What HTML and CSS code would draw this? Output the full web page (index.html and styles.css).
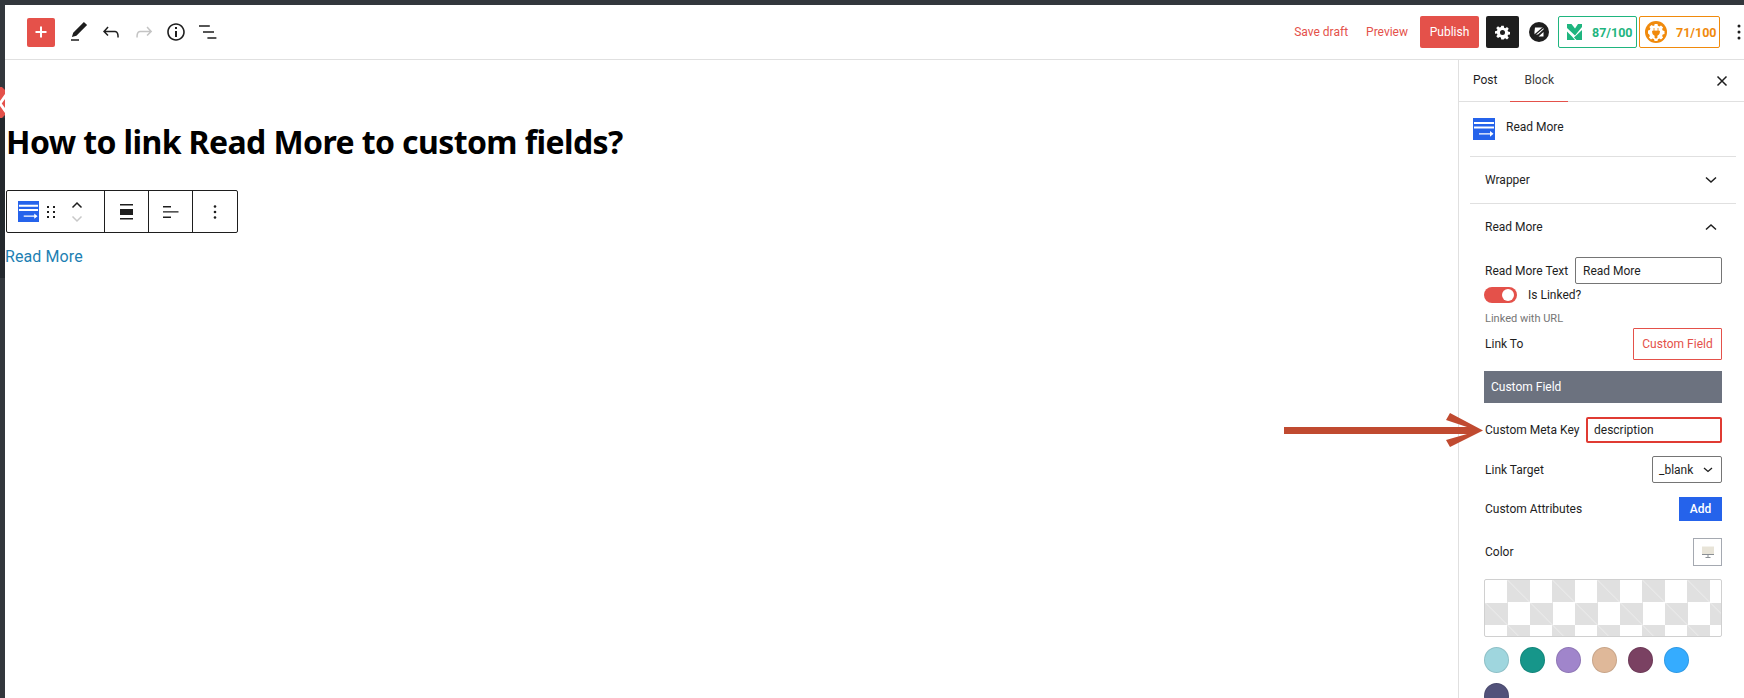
FILE: index.html
```html
<!DOCTYPE html>
<html lang="en">
<head>
<meta charset="utf-8">
<title>Edit Post</title>
<link rel="stylesheet" href="styles.css">
</head>
<body>
<div class="adminbar"></div>
<div class="shell">
  <div class="leftrail"><svg class="railmark" width="5" height="31" viewBox="0 0 5 31"><path d="M0 0h2l3 3v25l-3 3H0z" fill="#e4514a"/><path d="M0 16.500 6 8M0 16.500 6 25" stroke="#fff" stroke-width="3" fill="none"/></svg></div>
  <div class="main">
    <header class="topbar">
      <div class="tools">
        <button class="addbtn"><svg width="14" height="14" viewBox="0 0 14 14"><path d="M7 1.500v11M1.500 7h11" stroke="#fff" stroke-width="2" fill="none"/></svg></button>
        <svg class="tool" width="24" height="24" viewBox="0 0 24 24"><path d="M20.100 5.100 16.900 2 6.200 12.700l-1.300 4.400 4.500-1.300L20.100 5.100zM4 20.800h8v-1.500H4v1.500z" fill="#1e1e1e"/></svg>
        <svg class="tool" width="24" height="24" viewBox="0 0 24 24"><path d="M18.300 11.700c-.6-.6-1.400-.9-2.300-.9H6.700l2.900-3.300-1.100-1-4.500 5L8.500 16l1-1-2.700-2.700H16c.5 0 .9.2 1.300.5 1 1 1 3.400 1 4.500v.3h1.500v-.2c0-1.500 0-4.300-1.500-5.700z" fill="#1e1e1e"/></svg>
        <svg class="tool" width="24" height="24" viewBox="0 0 24 24"><path d="M15.600 6.500l-1.100 1 2.900 3.300H8c-.9 0-1.700.3-2.300.9-1.400 1.500-1.400 4.200-1.400 5.600v.2h1.500v-.3c0-1.100 0-3.500 1-4.500.3-.3.7-.5 1.300-.5h9.200L14.500 15l1.100 1.100 4.600-4.600-4.600-5z" fill="#c4c4c4"/></svg>
        <svg class="tool" width="24" height="24" viewBox="0 0 24 24"><path d="M12 3.200c-4.800 0-8.800 3.900-8.800 8.800 0 4.800 3.900 8.800 8.800 8.800 4.800 0 8.800-3.900 8.800-8.800 0-4.800-4-8.800-8.800-8.800zm0 16c-4 0-7.200-3.300-7.200-7.200C4.800 8 8 4.800 12 4.800s7.200 3.300 7.200 7.200c0 4-3.200 7.200-7.200 7.200zM11 17h2v-6h-2v6zm0-8h2V7h-2v2z" fill="#1e1e1e"/></svg>
        <svg class="tool" width="24" height="24" viewBox="0 0 24 24"><path d="M13.800 5.200H3v1.500h10.800V5.200zM7 11.200h11v1.500H7zM11.400 17.200h9v1.500h-9z" fill="#1e1e1e"/></svg>
      </div>
      <div class="actions">
        <a class="linkbtn savedraft">Save draft</a>
        <a class="linkbtn preview">Preview</a>
        <button class="publish">Publish</button>
        <button class="settings"><svg width="15" height="15" viewBox="0 0 24 24"><path fill-rule="evenodd" d="M10 1h4l.6 3.200 1.900.8 2.700-1.900 2.800 2.800-1.900 2.700.8 1.900 3.100.6v4l-3.100.6-.8 1.900 1.900 2.700-2.800 2.800-2.700-1.900-1.900.8L14 23h-4l-.6-3.200-1.900-.8-2.700 1.900L2 18.100l1.900-2.700-.8-1.900L0 13.900v-4l3.100-.6.8-1.900L2 4.700 4.800 1.900l2.700 1.900 1.900-.8zM12 8a4 4 0 1 0 0 8 4 4 0 0 0 0-8z" fill="#fff"/></svg></button>
        <svg class="zlogo" width="20" height="20" viewBox="0 0 20 20"><circle cx="10" cy="10" r="10" fill="#1e1e1e"/><path d="M6 5.500h8.500v2L9 12.500H5.500v-3zM14.500 14.500H9.500l5-4.500z" fill="#fff"/><path d="M5 13.500 15 5" stroke="#1e1e1e" stroke-width="1.300"/></svg>
        <div class="score green">
          <svg width="15" height="16" viewBox="0 0 15 16"><path d="M0 0h4.500L8 4.500 11 0h4v3l-7 8.500L0 4z" fill="#1fb57f"/><path d="M0 7.500l5 5L8 16H0zM15 6v10H9.500L7 13.500z" fill="#1fb57f"/></svg>
          <span>87/100</span>
        </div>
        <div class="score orange">
          <svg width="22" height="22" viewBox="0 0 22 22"><circle cx="11" cy="11" r="11" fill="#f08a0c"/><path d="M9.500 3h3l.4 1.800 1.500.6 1.600-1 2.100 2.100-1 1.600.6 1.500 1.800.4v3l-1.800.4-.6 1.500 1 1.600-2.100 2.100-1.600-1-1.500.6-.4 1.800h-3l-.4-1.800-1.500-.6-1.600 1-2.100-2.100 1-1.600-.6-1.500L3 12.500v-3l1.800-.4.6-1.500-1-1.600 2.100-2.100 1.600 1 1.500-.6z" fill="#fff"/><path d="M9 7v3M13 7v3M7.500 10h7v1.500A3.500 3.500 0 0 1 12 14.500V17h-2v-2.500a3.500 3.500 0 0 1-2.500-3z" fill="#f08a0c" stroke="#f08a0c" stroke-width=".8"/></svg>
          <span>71/100</span>
        </div>
        <svg class="kebab" width="4" height="16" viewBox="0 0 4 16"><circle cx="2" cy="2" r="1.500" fill="#1e1e1e"/><circle cx="2" cy="8" r="1.500" fill="#1e1e1e"/><circle cx="2" cy="14" r="1.500" fill="#1e1e1e"/></svg>
      </div>
    </header>
    <div class="workspace">
      <main class="editor">
        <h1 class="title">How to link Read More to custom fields?</h1>
        <div class="blocktoolbar">
          <div class="tbgroup first">
            <svg class="rmicon" width="21" height="21" viewBox="0 0 22 22"><rect width="22" height="22" fill="#2563eb"/><path d="M1 4h20v2H1zM1 8.500h20v2H1zM6 15.200h13v1.300H6z" fill="#fff"/><path d="M17 13l3.500 2.850L17 18.700z" fill="#fff"/></svg>
            <svg width="10" height="14" viewBox="0 0 10 14"><g fill="#1e1e1e"><rect x="1" y="1" width="2" height="2"/><rect x="7" y="1" width="2" height="2"/><rect x="1" y="6" width="2" height="2"/><rect x="7" y="6" width="2" height="2"/><rect x="1" y="11" width="2" height="2"/><rect x="7" y="11" width="2" height="2"/></g></svg>
            <div class="movers">
              <svg width="12" height="8" viewBox="0 0 12 8"><path d="M1.500 6.500 6 2l4.500 4.500" stroke="#1e1e1e" stroke-width="1.500" fill="none"/></svg>
              <svg width="12" height="8" viewBox="0 0 12 8"><path d="M1.500 1.500 6 6l4.500-4.500" stroke="#c8c8c8" stroke-width="1.500" fill="none"/></svg>
            </div>
          </div>
          <div class="tbgroup"><svg width="14" height="16" viewBox="0 0 14 16"><path d="M0 0h13v1.500H0zM0 5h13v6H0zM0 14h13v1.500H0z" fill="#1e1e1e"/></svg></div>
          <div class="tbgroup"><svg width="16" height="14" viewBox="0 0 16 14"><path d="M0 1h8v1.400H0zM0 6.200h15.500v1.400H0zM0 11.500h8v1.400H0z" fill="#1e1e1e"/></svg></div>
          <div class="tbgroup last"><svg width="4" height="14" viewBox="0 0 4 14"><circle cx="2" cy="1.500" r="1.300" fill="#1e1e1e"/><circle cx="2" cy="7" r="1.300" fill="#1e1e1e"/><circle cx="2" cy="12.500" r="1.300" fill="#1e1e1e"/></svg></div>
        </div>
        <a class="readmore">Read More</a>
        <div class="arrow">
          <svg width="200" height="35" viewBox="0 0 200 35"><path d="M0 14H183L162 7 166 0 199 17.500 166 34 162 27 183 21H0z" fill="#c04a30"/></svg>
        </div>
      </main>
      <aside class="sidebar">
        <div class="tabs">
          <span class="tab">Post</span>
          <span class="tab active">Block</span>
          <svg class="close" width="12" height="12" viewBox="0 0 12 12"><path d="M1.500 1.500l9 9M10.500 1.500l-9 9" stroke="#1e1e1e" stroke-width="1.500" fill="none"/></svg>
        </div>
        <div class="sidebody">
          <div class="blockcard">
            <svg width="22" height="22" viewBox="0 0 22 22"><rect width="22" height="22" fill="#2563eb"/><path d="M1 4h20v2H1zM1 8.500h20v2H1zM6 15.200h13v1.300H6z" fill="#fff"/><path d="M17 13l3.500 2.850L17 18.700z" fill="#fff"/></svg>
            <span class="cardname">Read More</span>
          </div>
          <div class="panel closed">
            <span>Wrapper</span>
            <svg width="12" height="8" viewBox="0 0 12 8"><path d="M1 1.500 6 6l5-4.500" stroke="#1e1e1e" stroke-width="1.500" fill="none"/></svg>
          </div>
          <div class="panel open">
            <span>Read More</span>
            <svg width="12" height="8" viewBox="0 0 12 8"><path d="M1 6.500 6 2l5 4.500" stroke="#1e1e1e" stroke-width="1.500" fill="none"/></svg>
          </div>
          <div class="fields">
            <div class="row textrow">
              <label>Read More Text</label>
              <div class="input w147">Read More</div>
            </div>
            <div class="togglerow">
              <span class="toggle"><i></i></span>
              <span>Is Linked?</span>
            </div>
            <div class="help">Linked with URL</div>
            <div class="row linkto">
              <label>Link To</label>
              <div class="outline">Custom Field</div>
            </div>
            <div class="greybar">Custom Field</div>
            <div class="row metakey">
              <label>Custom Meta Key</label>
              <div class="input meta">description</div>
            </div>
            <div class="row target">
              <label>Link Target</label>
              <div class="select">_blank<svg width="10" height="6" viewBox="0 0 10 6"><path d="M1 1l4 3.500L9 1" stroke="#1e1e1e" stroke-width="1.300" fill="none"/></svg></div>
            </div>
            <div class="row attrs">
              <label>Custom Attributes</label>
              <button class="addattr">Add</button>
            </div>
            <div class="row colorrow">
              <label>Color</label>
              <div class="device"><svg width="14" height="14" viewBox="0 0 14 14"><path d="M1 1.500h12v8H1z" fill="#e8e4d8"/><path d="M1 9.500h12M7 10v2M4.500 12.500h5" stroke="#8a8f94" stroke-width="1" fill="none"/></svg></div>
            </div>
            <div class="checker"></div>
            <div class="swatches">
              <span class="sw s1"></span><span class="sw s2"></span><span class="sw s3"></span><span class="sw s4"></span><span class="sw s5"></span><span class="sw s6"></span><span class="sw s7"></span>
            </div>
          </div>
        </div>
      </aside>
    </div>
  </div>
</div>
</body>
</html>
```
FILE: styles.css
```css
* { box-sizing: border-box; }
html, body { margin: 0; height: 100%; overflow: hidden; background: #fff; }
body { font-family: Roboto, "Noto Sans", sans-serif; font-size: 12px; color: #1e1e1e; }
button { font-family: inherit; border: 0; padding: 0; }
label { white-space: nowrap; }
.adminbar { height: 5px; background: #32373c; }
.shell { display: flex; height: 693px; }
.leftrail { width: 5px; flex: none; position: relative; background: linear-gradient(#32373c 0 113px, #23282d 113px 273px, #32373c 273px); }
.railmark { position: absolute; left: 0; top: 82px; display: block; }
.main { flex: 1; min-width: 0; display: flex; flex-direction: column; }
.topbar { height: 55px; border-bottom: 1px solid #e0e0e0; display: flex; justify-content: space-between; align-items: center; padding: 0 3px 0 22px; flex: none; }
.tools { display: flex; align-items: center; }
.addbtn { width: 28px; height: 29px; background: #e5514a; border-radius: 2px; display: flex; align-items: center; justify-content: center; margin-right: 12px; }
.tool { margin-right: 8.25px; }
.actions { display: flex; align-items: center; }
.linkbtn { color: #e4514a; font-size: 12px; }
.savedraft { margin-right: 18px; }
.preview { margin-right: 12px; }
.publish { width: 59px; height: 32px; background: #e4514a; color: #fff; font-size: 12px; border-radius: 2px; margin-right: 7px; }
.settings { width: 33px; height: 32px; background: #1e1e1e; border-radius: 2px; display: flex; align-items: center; justify-content: center; margin-right: 10px; }
.zlogo { margin-right: 9px; }
.score { height: 32px; border-radius: 2px; display: flex; align-items: center; font-weight: 700; font-size: 12.5px; background: #fff; }
.green { width: 79px; border: 1px solid #1fb57f; color: #1fb57f; padding-left: 8px; gap: 10px; margin-right: 2px; }
.orange { width: 81px; border: 1px solid #f08a0c; color: #f08a0c; padding-left: 5px; gap: 9px; margin-right: 17px; }
.workspace { flex: 1; display: flex; min-height: 0; }
.editor { flex: 1; position: relative; min-width: 0; padding-left: 1px; }
.title { margin: 0; font-family: "Noto Sans", sans-serif; font-size: 32px; line-height: 44px; font-weight: 700; color: #000; padding-top: 60px; letter-spacing: -0.6px; }
.blocktoolbar { margin-top: 26px; width: 232px; height: 43px; border: 1px solid #1e1e1e; border-radius: 2px; display: flex; background: #fff; }
.tbgroup { width: 44px; display: flex; align-items: center; justify-content: center; border-left: 1px solid #1e1e1e; }
.tbgroup.first { width: 97px; border-left: 0; justify-content: flex-start; padding-left: 11px; gap: 7px; }
.tbgroup.last { width: 45px; }
.movers { display: flex; flex-direction: column; gap: 6px; margin-left: 8px; }
.readmore { display: block; margin-top: 13px; margin-left: -1px; font-family: Roboto, sans-serif; font-size: 16px; letter-spacing: .1px; line-height: 22px; color: #1d7fb3; }
.arrow { position: absolute; left: 1279px; top: 353px; line-height: 0; z-index: 2; }
.sidebar { width: 286px; flex: none; border-left: 1px solid #e0e0e0; display: flex; flex-direction: column; overflow: visible; position: relative; }
.tabs { height: 42px; border-bottom: 1px solid #e0e0e0; display: flex; align-items: center; position: relative; padding-left: 14px; gap: 27px; flex: none; }
.tab { position: relative; line-height: 41px; }
.tab.active::after { content: ""; position: absolute; left: -14px; right: -14px; bottom: -1px; height: 1px; background: #e4514a; }
.tab.active { color: #3c3c3c; }
.close { position: absolute; right: 16px; top: 15px; }
.sidebody { padding: 0 8px 0 11px; }
.blockcard { height: 55px; display: flex; align-items: center; gap: 11px; padding: 0 3px 0 3px; border-bottom: 1px solid #e0e0e0; }
.cardname { position: relative; top: -2px; }
.panel { display: flex; justify-content: space-between; align-items: center; padding: 0 19px 0 15px; height: 47px; font-weight: 400; }
.closed { border-bottom: 1px solid #e0e0e0; }
.panel.open { height: 45px; }
.fields { padding: 0 14px; }
.row { display: flex; justify-content: space-between; align-items: center; padding-left: 1px; }
.input { height: 27px; border: 1px solid #757575; border-radius: 2px; display: flex; align-items: center; padding-left: 7px; background: #fff; }
.w147 { width: 147px; }
.textrow { margin-top: 8px; }
.togglerow { display: flex; align-items: center; gap: 11px; margin-top: 3px; height: 16px; }
.toggle { width: 33px; height: 16px; background: #e4514a; border-radius: 8px; position: relative; display: block; }
.toggle i { position: absolute; right: 3px; top: 2px; width: 12px; height: 12px; background: #fff; border-radius: 50%; }
.help { color: #757575; font-size: 11px; margin-top: 8px; line-height: 16px; padding-left: 1px; }
.linkto { margin-top: 1px; }
.outline { width: 89px; height: 32px; border: 1px solid #e4514a; border-radius: 1px; color: #e4514a; display: flex; align-items: center; justify-content: center; }
.greybar { height: 32px; margin-top: 11px; background: #6c727f; color: #fff; font-weight: 400; display: flex; align-items: center; padding-left: 7px; }
.metakey { margin-top: 14px; }
.meta { width: 136px; height: 26px; border: 2px solid #e03b33; padding-left: 6px; }
.target { margin-top: 13px; }
.select { width: 70px; height: 27px; border: 1px solid #757575; border-radius: 2px; display: flex; align-items: center; justify-content: space-between; padding: 0 8px 0 6px; }
.attrs { margin-top: 14px; }
.addattr { width: 43px; height: 24px; background: #2563eb; color: #fff; font-size: 12px; font-weight: 500; }
.colorrow { margin-top: 17px; }
.device { width: 29px; height: 28px; border: 1px solid #a5a9b1; display: flex; align-items: center; justify-content: center; }
.checker { height: 58px; margin-top: 13px; border: 1px solid #d0d0d0; border-radius: 2px; background-color: #fff; background-image: linear-gradient(45deg, transparent 49%, rgba(255,255,255,.45) 49%, rgba(255,255,255,.45) 51%, transparent 51%), repeating-conic-gradient(#e0e0e0 0 25%, #fff 0 50%); background-size: 22.5px 22.5px, 45px 45px; }
.swatches { display: flex; flex-wrap: wrap; gap: 10px 11px; margin-top: 10px; }
.sw { width: 25px; height: 26px; border-radius: 50%; border: 1px solid rgba(0,0,0,.1); display: block; }
.s1 { background: #9fd6de; }
.s2 { background: #16968a; }
.s3 { background: #a085cb; }
.s4 { background: #dfb899; }
.s5 { background: #7a4162; }
.s6 { background: #35acff; }
.s7 { background: #52527a; }
```
